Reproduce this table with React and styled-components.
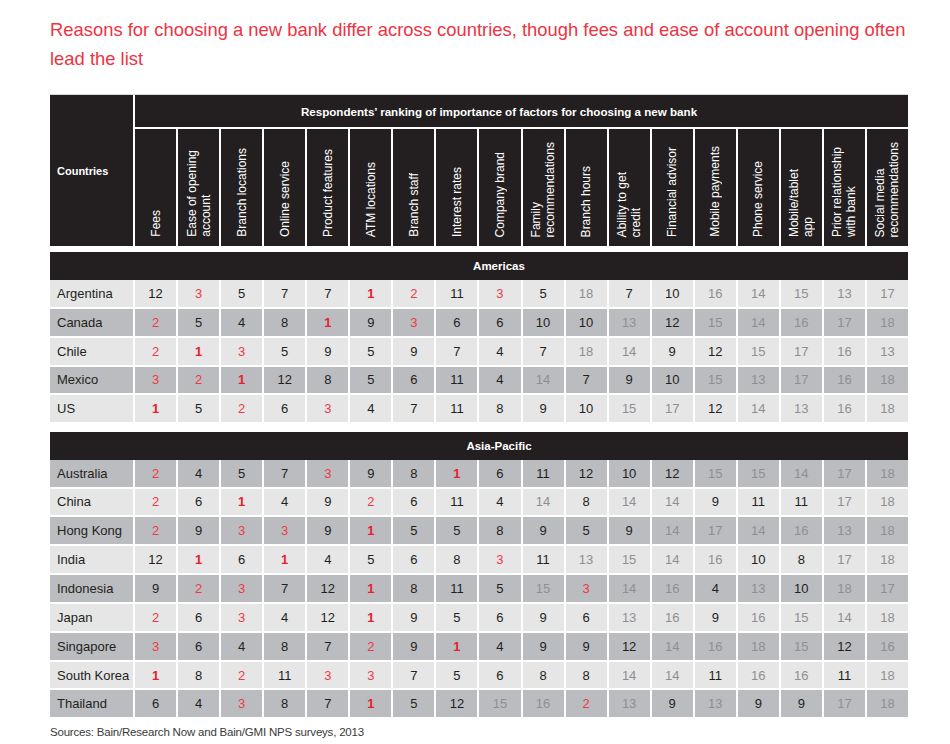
import React from 'react';
import styled, { createGlobalStyle } from 'styled-components';

const GlobalStyle = createGlobalStyle`
  html, body {
    margin: 0;
    padding: 0;
    background: #fff;
  }
  body {
    font-family: "Liberation Sans", Arial, sans-serif;
    color: #231f20;
  }
`;

const DARK = '#231f20';

const Page = styled.div`
  width: 950px;
  box-sizing: border-box;
  padding: 15px 0 0 50px;
`;

const Title = styled.h1`
  margin: 0;
  font-size: 18.4px;
  font-weight: normal;
  line-height: 29px;
  color: #ee3342;
`;

const Table = styled.div`
  width: 858px;
  margin-top: 21px;
`;

const Head = styled.div`
  display: grid;
  grid-template-columns: 83px repeat(18, 1fr);
  grid-template-rows: 32px 117px;
  gap: 2px;
  border-top: 1px solid #d9d9d9;
`;

const CountriesCell = styled.div`
  grid-row: 1 / span 2;
  background: ${DARK};
  color: #fff;
  font-size: 11px;
  font-weight: bold;
  display: flex;
  align-items: center;
  padding-left: 7px;
`;

const HeadTitle = styled.div`
  grid-column: 2 / span 18;
  background: ${DARK};
  color: #fff;
  font-size: 11.6px;
  font-weight: bold;
  display: flex;
  align-items: center;
  justify-content: center;
  padding-right: 45px;
`;

const FactorCell = styled.div`
  background: ${DARK};
  display: flex;
  justify-content: center;
  align-items: flex-end;
  padding-bottom: 9px;
  overflow: hidden;
`;

const FactorLabel = styled.span`
  writing-mode: vertical-rl;
  transform: rotate(180deg);
  white-space: pre-line;
  text-align: start;
  color: #fff;
  font-size: 12px;
  line-height: 14px;
`;

const Group = styled.div`
  margin-top: ${p => p.$gap}px;
`;

const GroupBar = styled.div`
  height: 28px;
  background: ${DARK};
  color: #fff;
  font-size: 11.5px;
  font-weight: bold;
  display: flex;
  align-items: center;
  justify-content: center;
  padding-left: 40px;
`;

const Row = styled.div`
  display: grid;
  grid-template-columns: 83px repeat(18, 1fr);
  column-gap: 2px;
  height: 26.85px;
  & + & {
    margin-top: 2px;
  }
`;

const shades = { light: '#e6e6e7', dark: '#bbbcbf' };

const Country = styled.div`
  background: ${p => shades[p.$shade]};
  font-size: 13px;
  display: flex;
  align-items: center;
  padding-left: 7px;
  white-space: nowrap;
`;

const tones = {
  first: { color: '#e8202e', weight: 'bold' },
  red: { color: '#ee3a45', weight: 'normal' },
  plain: { color: DARK, weight: 'normal' },
  muted: { color: '#8f8f92', weight: 'normal' },
};

const Value = styled.div`
  background: ${p => shades[p.$shade]};
  color: ${p => tones[p.$tone].color};
  font-weight: ${p => tones[p.$tone].weight};
  font-size: 13px;
  display: flex;
  align-items: center;
  justify-content: center;
`;

const Sources = styled.p`
  margin: 7px 0 0;
  font-size: 11.5px;
  line-height: 16px;
  color: #3a3a3a;
  letter-spacing: -0.2px;
`;

const factors = [
  'Fees',
  'Ease of opening\naccount',
  'Branch locations',
  'Online service',
  'Product features',
  'ATM locations',
  'Branch staff',
  'Interest rates',
  'Company brand',
  'Family\nrecommendations',
  'Branch hours',
  'Ability to get\ncredit',
  'Financial advisor',
  'Mobile payments',
  'Phone service',
  'Mobile/tablet\napp',
  'Prior relationship\nwith bank',
  'Social media\nrecommendations',
];

const regions = [
  {
    name: 'Americas',
    gap: 6,
    rows: [
      ['Argentina', [12, 3, 5, 7, 7, 1, 2, 11, 3, 5, 18, 7, 10, 16, 14, 15, 13, 17]],
      ['Canada', [2, 5, 4, 8, 1, 9, 3, 6, 6, 10, 10, 13, 12, 15, 14, 16, 17, 18]],
      ['Chile', [2, 1, 3, 5, 9, 5, 9, 7, 4, 7, 18, 14, 9, 12, 15, 17, 16, 13]],
      ['Mexico', [3, 2, 1, 12, 8, 5, 6, 11, 4, 14, 7, 9, 10, 15, 13, 17, 16, 18]],
      ['US', [1, 5, 2, 6, 3, 4, 7, 11, 8, 9, 10, 15, 17, 12, 14, 13, 16, 18]],
    ],
  },
  {
    name: 'Asia-Pacific',
    gap: 9.5,
    rows: [
      ['Australia', [2, 4, 5, 7, 3, 9, 8, 1, 6, 11, 12, 10, 12, 15, 15, 14, 17, 18]],
      ['China', [2, 6, 1, 4, 9, 2, 6, 11, 4, 14, 8, 14, 14, 9, 11, 11, 17, 18]],
      ['Hong Kong', [2, 9, 3, 3, 9, 1, 5, 5, 8, 9, 5, 9, 14, 17, 14, 16, 13, 18]],
      ['India', [12, 1, 6, 1, 4, 5, 6, 8, 3, 11, 13, 15, 14, 16, 10, 8, 17, 18]],
      ['Indonesia', [9, 2, 3, 7, 12, 1, 8, 11, 5, 15, 3, 14, 16, 4, 13, 10, 18, 17]],
      ['Japan', [2, 6, 3, 4, 12, 1, 9, 5, 6, 9, 6, 13, 16, 9, 16, 15, 14, 18]],
      ['Singapore', [3, 6, 4, 8, 7, 2, 9, 1, 4, 9, 9, 12, 14, 16, 18, 15, 12, 16]],
      ['South Korea', [1, 8, 2, 11, 3, 3, 7, 5, 6, 8, 8, 14, 14, 11, 16, 16, 11, 18]],
      ['Thailand', [6, 4, 3, 8, 7, 1, 5, 12, 15, 16, 2, 13, 9, 13, 9, 9, 17, 18]],
    ],
  },
];

const toneOf = v => (v === 1 ? 'first' : v <= 3 ? 'red' : v <= 12 ? 'plain' : 'muted');

export default function App() {
  let idx = 0;
  return (
    <Page>
      <GlobalStyle />
      <Title>
        Reasons for choosing a new bank differ across countries, though fees and ease of account opening often
        <br />
        lead the list
      </Title>
      <Table>
        <Head>
          <CountriesCell>Countries</CountriesCell>
          <HeadTitle>Respondents’ ranking of importance of factors for choosing a new bank</HeadTitle>
          {factors.map(f => (
            <FactorCell key={f}>
              <FactorLabel>{f}</FactorLabel>
            </FactorCell>
          ))}
        </Head>
        {regions.map(r => (
          <Group key={r.name} $gap={r.gap}>
            <GroupBar>{r.name}</GroupBar>
            {r.rows.map(([country, values]) => {
              const shade = idx++ % 2 === 0 ? 'light' : 'dark';
              return (
                <Row key={country}>
                  <Country $shade={shade}>{country}</Country>
                  {values.map((v, i) => (
                    <Value key={i} $shade={shade} $tone={toneOf(v)}>{v}</Value>
                  ))}
                </Row>
              );
            })}
          </Group>
        ))}
      </Table>
      <Sources>Sources: Bain/Research Now and Bain/GMI NPS surveys, 2013</Sources>
    </Page>
  );
}
